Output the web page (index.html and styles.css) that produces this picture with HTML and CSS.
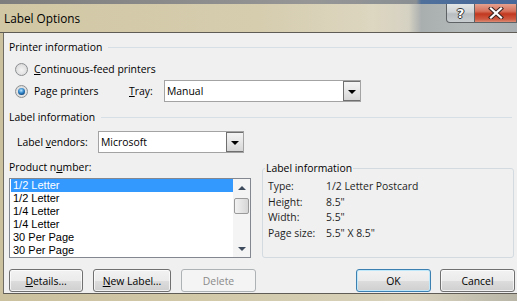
FILE: index.html
```html
<!DOCTYPE html>
<html lang="en">
<head>
  <meta charset="UTF-8">
  <title>Label Options</title>
  <link rel="stylesheet" href="styles.css">
</head>
<body>
  <div class="window">
    <div class="titlebar">
      <span class="title">Label Options</span>
      <div class="caption">
        <span class="cap help">?</span>
        <span class="cap close">
          <svg width="16" height="12" viewBox="0 0 16 12">
            <path d="M3 1.5 L13 10.5 M13 1.5 L3 10.5" stroke="#3b2420" stroke-width="4.2" stroke-linecap="square"/>
            <path d="M3 1.5 L13 10.5 M13 1.5 L3 10.5" stroke="#fff" stroke-width="2.2" stroke-linecap="square"/>
          </svg>
        </span>
      </div>
    </div>

    <div class="client">
      <div class="section-head"><span>Printer information</span><i class="rule"></i></div>

      <label class="radio-row first"><span class="radio"></span><span><u>C</u>ontinuous-feed printers</span></label>

      <div class="page-row">
        <label class="radio-row page"><span class="radio checked"></span><span>Pa<u>g</u>e printers</span></label>
        <span class="tray-label"><u>T</u>ray:</span>
        <div class="combo tray"><span class="combo-text">Manual</span><span class="drop"></span></div>
      </div>

      <div class="section-head second"><span>Label information</span><i class="rule"></i></div>

      <div class="vendor-row">
        <span class="vendor-label">Label <u>v</u>endors:</span>
        <div class="combo vendor"><span class="combo-text">Microsoft</span><span class="drop"></span></div>
      </div>

      <div class="lower">
        <div class="product">
          <div class="product-label">Product n<u>u</u>mber:</div>
          <div class="listbox">
            <ul class="items">
              <li class="selected">1/2 Letter</li>
              <li>1/2 Letter</li>
              <li>1/4 Letter</li>
              <li>1/4 Letter</li>
              <li>30 Per Page</li>
              <li>30 Per Page</li>
            </ul>
            <div class="scrollbar">
              <span class="arrow up"></span>
              <span class="track"><span class="thumb"></span></span>
              <span class="arrow down"></span>
            </div>
          </div>
        </div>

        <fieldset class="info">
          <legend>Label information</legend>
          <div class="info-grid">
            <span>Type:</span><span>1/2 Letter Postcard</span>
            <span>Height:</span><span>8.5"</span>
            <span>Width:</span><span>5.5"</span>
            <span>Page size:</span><span>5.5" X 8.5"</span>
          </div>
        </fieldset>
      </div>

      <div class="buttons">
        <button class="btn details"><u>D</u>etails...</button>
        <button class="btn newlabel"><u>N</u>ew Label...</button>
        <button class="btn delete" disabled>Delete</button>
        <button class="btn ok">OK</button>
        <button class="btn cancel">Cancel</button>
      </div>
    </div>
  </div>
</body>
</html>
```

FILE: styles.css
```css
* {
  box-sizing: border-box;
}
body {
  margin: 0;
  font-family: "Open Sans", "Noto Sans", sans-serif;
  font-size: 10.4px;
  color: #000;
}
u {
  text-decoration: underline;
  text-underline-offset: 1px;
}
.window {
  width: 517px;
  height: 301px;
  display: flex;
  flex-direction: column;
  padding: 0 0 7px 3px;
  background: linear-gradient(90deg, #cbc19f 0, #d2c9a9 40%, #d8d2bd 80%, #b9b6a8 100%);
  overflow: hidden;
}
.titlebar {
  height: 33px;
  flex: none;
  margin-left: -3px;
  display: flex;
  align-items: flex-start;
  border-bottom: 1px solid #5e5c55;
  background:
    linear-gradient(90deg, #7d7d7d 0, #969696 60%, #8a8f93 80.5%, #4f709b 81.5%, #46689a 100%) top / 100% 4px no-repeat,
    linear-gradient(90deg, #d1c7a4 0%, #d6cdaf 50%, #ddd6c0 72%, #d6d2c3 79%, #a9aeaf 81.5%, #b3b8b9 90%, #a9aeb0 100%);
}
.title {
  padding: 11px 0 0 4px;
  font-size: 11.8px;
  line-height: 15px;
  color: #000;
}
.caption {
  margin-left: auto;
  margin-top: 4px;
  display: flex;
}
.cap {
  height: 19px;
  display: flex;
  align-items: center;
  justify-content: center;
  border: 1px solid #5f6265;
  border-top: none;
}
.help {
  width: 29px;
  border-radius: 0 0 0 4px;
  background: linear-gradient(#e3e6e7, #cfd3d5 45%, #b7bdc0 55%, #c9ced0);
  color: #fff;
  font-family: "DejaVu Sans", sans-serif;
  font-weight: bold;
  font-size: 13px;
  text-shadow: 1px 0 #333, -1px 0 #333, 0 1px #333, 0 -1px #333;
}
.close {
  width: 42px;
  border-left: none;
  background: linear-gradient(#e4a18f, #d6705b 40%, #c2381f 55%, #cf5a42 85%, #dd8c75);
}
.client {
  flex: 1;
  display: flex;
  flex-direction: column;
  background: #f0f0f0;
  border-left: 1px solid #6f6c63;
  border-bottom: 1px solid #5e5c55;
  padding: 7px 0 0 5px;
}
.section-head {
  display: flex;
  align-items: center;
  gap: 6px;
  height: 15px;
  line-height: 15px;
  padding-right: 5px;
}
.section-head .rule {
  flex: 1;
  height: 1px;
  background: #d5dfe5;
}
.section-head.second {
  margin-top: 8px;
}
.radio-row {
  display: flex;
  align-items: center;
  gap: 6px;
  height: 15px;
  line-height: 15px;
  margin-left: 6px;
}
.radio-row.first {
  margin-top: 7px;
}
.radio {
  width: 13px;
  height: 13px;
  flex: none;
  border-radius: 50%;
  border: 1px solid #8c8f91;
  background: radial-gradient(circle at 50% 55%, #f4f4f4 0, #e2e2e2 55%, #cfcfcf 100%);
  display: flex;
  align-items: center;
  justify-content: center;
}
.radio.checked::after {
  content: "";
  width: 7px;
  height: 7px;
  border-radius: 50%;
  background: radial-gradient(circle at 45% 35%, #bfe6ff 0, #3a8fd0 40%, #0f4a82 75%, #0b3463 100%);
}
.page-row {
  display: flex;
  align-items: center;
  height: 22px;
  margin-top: 3px;
}
.radio-row.page {
  width: 114px;
}
.tray-label {
  width: 35px;
}
.combo {
  height: 22px;
  display: flex;
  align-items: center;
  background: #fff;
  border: 1px solid #a3a3a3;
}
.combo-text {
  flex: 1;
  padding-left: 2px;
}
.combo.tray {
  width: 197px;
}
.drop {
  width: 17px;
  height: 20px;
  border: 1px solid #6f6f6f;
  border-right: none;
  background: linear-gradient(#f4f4f4, #e6e6e6 50%, #d6d6d6);
  display: flex;
  align-items: center;
  justify-content: center;
}
.drop::after {
  content: "";
  margin-top: 2px;
  border-left: 4px solid transparent;
  border-right: 4px solid transparent;
  border-top: 4px solid #000;
}
.vendor-row {
  display: flex;
  align-items: center;
  height: 22px;
  margin-top: 6px;
  margin-left: 8px;
}
.vendor-label {
  width: 81px;
}
.combo.vendor {
  width: 146px;
}
.lower {
  display: flex;
  margin-top: 7px;
}
.product {
  width: 242px;
}
.product-label {
  height: 15px;
  line-height: 15px;
}
.listbox {
  margin-top: 3px;
  height: 80px;
  display: flex;
  background: #fff;
  border: 1px solid #828790;
  padding: 0 0 0 1px;
}
.items {
  flex: 1;
  list-style: none;
  margin: 0;
  padding: 0;
  font-family: "Liberation Sans", Arial, sans-serif;
  font-size: 11px;
}
.items li {
  height: 13px;
  line-height: 13px;
  padding-left: 2px;
  color: #000;
}
.items li.selected {
  background: #3399ff;
  color: #fff;
}
.scrollbar {
  width: 17px;
  display: flex;
  flex-direction: column;
  background: #f4f4f4;
}
.arrow {
  height: 17px;
  display: flex;
  align-items: center;
  justify-content: center;
}
.arrow.up::after {
  content: "";
  border-left: 4px solid transparent;
  border-right: 4px solid transparent;
  border-bottom: 4px solid #3d4b5c;
}
.arrow.down::after {
  content: "";
  border-left: 4px solid transparent;
  border-right: 4px solid transparent;
  border-top: 4px solid #3d4b5c;
}
.track {
  flex: 1;
  padding: 2px 1px 0;
}
.thumb {
  display: block;
  height: 16px;
  border: 1px solid #9a9a9a;
  border-radius: 2px;
  background: linear-gradient(90deg, #f2f2f2, #e4e4e4 50%, #d6d6d6);
}
.info {
  margin: 1px 0 0 11px;
  width: 252px;
  height: 97px;
  padding: 3px 0 0 5px;
  border: 1px solid #d3dbe0;
  border-radius: 3px;
}
.info legend {
  margin-left: -3px;
  padding: 0 1px;
  line-height: 15px;
}
.info-grid {
  display: grid;
  grid-template-columns: 58px auto;
  line-height: 15.6px;
  color: #1e1e1e;
}
.buttons {
  display: flex;
  gap: 10px;
  margin-top: 11px;
  padding-right: 2px;
}
.btn {
  height: 23px;
  font-family: inherit;
  font-size: 10.4px;
  color: #000;
  border: 1px solid #707070;
  border-radius: 3px;
  background: linear-gradient(#f2f2f2 0%, #ebebeb 50%, #dddddd 51%, #cfcfcf 100%);
  box-shadow: inset 0 0 0 1px rgba(255, 255, 255, 0.7);
  padding: 0;
}
.details {
  width: 74px;
}
.newlabel {
  width: 78px;
}
.delete {
  width: 75px;
  color: #8a8a8a;
  border-color: #adb2b5;
  background: #f4f4f4;
  box-shadow: none;
}
.ok {
  width: 75px;
  margin-left: auto;
  border-color: #3c7fb1;
  box-shadow: inset 0 0 0 1px #bfe8fa;
}
.cancel {
  width: 75px;
  margin-left: -1px;
}
```
